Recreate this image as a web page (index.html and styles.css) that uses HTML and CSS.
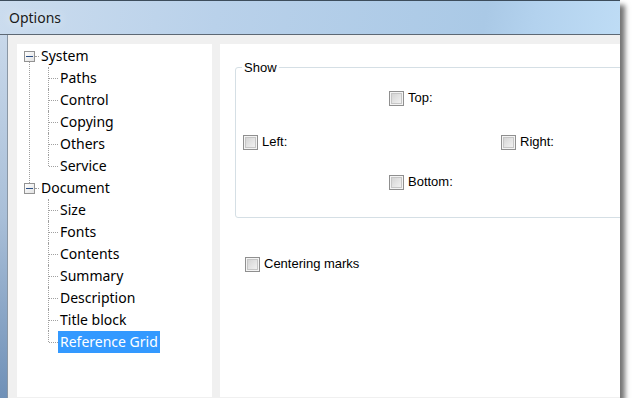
FILE: index.html
```html
<!DOCTYPE html>
<html lang="en">
<head>
    <meta charset="UTF-8">
    <title>Options</title>
    <link rel="stylesheet" href="styles.css">
</head>
<body>
    <div class="window">
        <div class="titlebar">Options</div>
        <div class="client">
            <div class="frame"></div>
            <div class="panes">
                <div class="tree">
                    <ul class="tree-root">
                        <li class="branch">
                            <div class="node"><span class="expander"></span><span class="hline"></span><span class="label">System</span></div>
                            <ul class="children">
                                <li><span class="label">Paths</span></li>
                                <li><span class="label">Control</span></li>
                                <li><span class="label">Copying</span></li>
                                <li><span class="label">Others</span></li>
                                <li><span class="label">Service</span></li>
                            </ul>
                        </li>
                        <li class="branch">
                            <div class="node"><span class="expander"></span><span class="hline"></span><span class="label">Document</span></div>
                            <ul class="children">
                                <li><span class="label">Size</span></li>
                                <li><span class="label">Fonts</span></li>
                                <li><span class="label">Contents</span></li>
                                <li><span class="label">Summary</span></li>
                                <li><span class="label">Description</span></li>
                                <li><span class="label">Title block</span></li>
                                <li><span class="label selected">Reference Grid</span></li>
                            </ul>
                        </li>
                    </ul>
                </div>
                <div class="page">
                    <fieldset class="group">
                        <legend>Show</legend>
                        <div class="group-grid">
                            <label class="check col-mid"><span class="box"></span>Top:</label>
                            <label class="check row-2"><span class="box"></span>Left:</label>
                            <label class="check row-2 col-right"><span class="box"></span>Right:</label>
                            <label class="check row-3 col-mid"><span class="box"></span>Bottom:</label>
                        </div>
                    </fieldset>
                    <label class="check centering"><span class="box"></span>Centering marks</label>
                </div>
            </div>
        </div>
    </div>
</body>
</html>
```

FILE: styles.css
```css
body {
    margin: 0;
    background: #ffffff;
}

.window {
    width: 620px;
    height: 398px;
    display: flex;
    flex-direction: column;
    box-sizing: border-box;
    border-top: 1px solid #3d4d5c;
    box-shadow: 5px 5px 5px rgba(0, 0, 0, 0.55);
}

.titlebar {
    height: 33px;
    line-height: 33px;
    padding-left: 9px;
    font-family: "Noto Sans", sans-serif;
    font-size: 14px;
    color: #1a1a1a;
    text-shadow: 0 0 10px rgba(255, 255, 255, 0.9);
    background: linear-gradient(100deg, #cbdcee 0%, #b9d1ea 35%, #aac9e6 78%, #b3d2ee 86%, #bedcf5 100%);
    border-bottom: 1px solid #5d6874;
}

.client {
    flex: 1;
    display: flex;
}

.frame {
    width: 7px;
    background: linear-gradient(#c8d8ea, #a9bfd8 50%, #6f90b7);
    border-right: 1px solid #8a97a5;
}

.panes {
    flex: 1;
    display: flex;
    gap: 8px;
    padding: 9px 0 1px 9px;
    background: #f0f0f0;
}

/* tree view */

.tree {
    width: 195px;
    background: #ffffff;
    padding-top: 1px;
    font-family: "Noto Sans", sans-serif;
    font-size: 14px;
    line-height: 22px;
    color: #000000;
}

.tree ul {
    list-style: none;
    margin: 0;
    padding: 0;
}

.branch {
    position: relative;
}

.branch:first-child::before {
    content: "";
    position: absolute;
    left: 12px;
    top: 17px;
    bottom: -6px;
    border-left: 1px dotted #a0a0a0;
}

.node {
    height: 22px;
    display: flex;
    align-items: center;
    padding-left: 7px;
}

.expander {
    position: relative;
    width: 11px;
    height: 11px;
    box-sizing: border-box;
    border: 1px solid #939393;
    background: linear-gradient(135deg, #ffffff, #e2e2e2);
}

.expander::after {
    content: "";
    position: absolute;
    left: 1px;
    top: 4px;
    width: 7px;
    height: 1px;
    background: #2b4f86;
}

.hline {
    width: 4px;
    border-top: 1px dotted #a0a0a0;
}

.label {
    display: inline-block;
    padding: 0 2px;
}

.label.selected {
    background: #3399ff;
    color: #ffffff;
}

.children li {
    position: relative;
    height: 22px;
    padding-left: 41px;
}

.children li::before {
    content: "";
    position: absolute;
    left: 31px;
    top: 0;
    height: 22px;
    border-left: 1px dotted #a0a0a0;
}

.children li:last-child::before {
    height: 11px;
}

.children li::after {
    content: "";
    position: absolute;
    left: 32px;
    top: 11px;
    width: 9px;
    border-top: 1px dotted #a0a0a0;
}

/* property page */

.page {
    flex: 1;
    background: #ffffff;
    padding: 16px 0 0 15px;
    overflow: hidden;
    font-family: "Liberation Sans", Arial, sans-serif;
    font-size: 13px;
    color: #000000;
}

.group {
    margin: 0 -30px 0 0;
    padding: 15px 0 27px 0;
    min-width: 0;
    border: 1px solid #d5dfe5;
    border-radius: 3px;
}

.group legend {
    margin-left: 6px;
    padding: 0 2px;
    line-height: 15px;
}

.group-grid {
    display: grid;
    grid-template-columns: 146px 112px auto;
    grid-template-rows: 44px 40px 16px;
    align-items: start;
    padding-left: 7px;
}

.check {
    display: flex;
    align-items: center;
    gap: 4px;
    height: 16px;
    line-height: 16px;
}

.col-mid {
    grid-column: 2;
}

.col-right {
    grid-column: 3;
}

.row-2 {
    grid-row: 2;
}

.row-3 {
    grid-row: 3;
}

.box {
    width: 15px;
    height: 15px;
    box-sizing: border-box;
    border: 1px solid #8f8f8f;
    background: linear-gradient(135deg, #cfcfcf, #f7f7f7);
    box-shadow: inset 0 0 0 1px #f4f4f4, inset 0 0 0 2px #c6c6c6;
}

.centering {
    margin: 38px 0 0 10px;
}
```
